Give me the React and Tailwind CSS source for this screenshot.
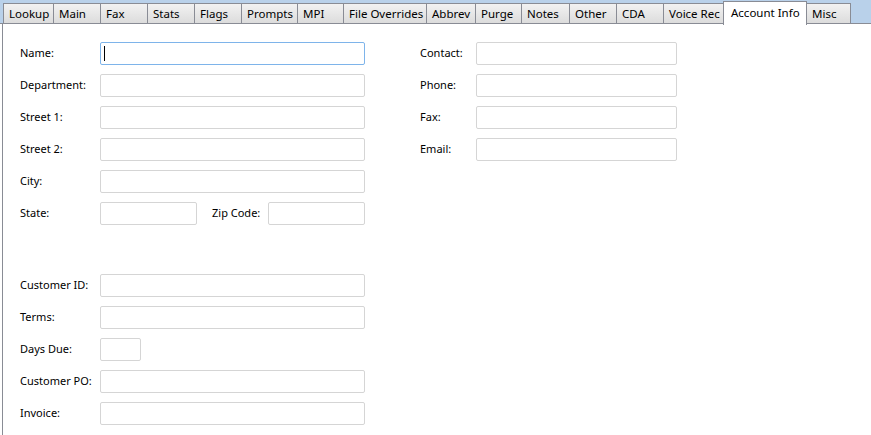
const tabs = [
  ['Lookup', 51], ['Main', 48], ['Fax', 48], ['Stats', 48], ['Flags', 48], ['Prompts', 57], ['MPI', 47],
  ['File Overrides', 84], ['Abbrev', 50], ['Purge', 47], ['Notes', 49], ['Other', 48], ['CDA', 48],
  ['Voice Rec', 61], ['Account Info', 84], ['Misc', 45],
]

function Input({ w = 'w-[265px]', focus }) {
  return (
    <div className={`${w} h-[23px] bg-white rounded-[2px] border ${focus ? 'border-[#7eb4ea]' : 'border-[#d5d5d5]'} flex items-center pl-[3px]`}>
      {focus && <div className="w-px h-[15px] bg-black" />}
    </div>
  )
}

function Row({ label, children }) {
  return (
    <div className="h-[23px] flex items-center">
      <div className="w-[80px] shrink-0">{label}</div>
      {children}
    </div>
  )
}

export default function App() {
  return (
    <div className="w-[871px] h-[435px] bg-white text-[11px] text-black overflow-hidden" style={{ fontFamily: '"Noto Sans", "DejaVu Sans", sans-serif' }}>
      <div className="h-[3px] bg-[#b9d1ea]" />
      <div className="flex pl-[3px] h-[21px] bg-[#b9d1ea] border-b border-[#898c95] relative">
        {tabs.map(([t, w]) => t === 'Account Info' ? (
          <div key={t} style={{ width: w }} className="shrink-0 whitespace-nowrap h-[24px] -mt-[2px] -ml-px bg-white border border-b-0 border-[#898c95] flex items-start pt-[2px] pl-[7px] text-[11.5px] z-10 relative">{t}</div>
        ) : (
          <div key={t} style={{ width: w }} className="shrink-0 whitespace-nowrap h-[20px] bg-gradient-to-b from-[#f2f2f2] to-[#dcdcdc] border border-b-0 border-[#898c95] -ml-px first:ml-0 flex items-center pl-[5px] text-[11.5px]">{t}</div>
        ))}
      </div>
      <div className="flex pl-[17px] pt-[18px] border-l border-[#898c95] ml-[2px] h-full">
        <div className="w-[345px] flex flex-col gap-[9px]">
          <Row label="Name:"><Input focus /></Row>
          <Row label="Department:"><Input /></Row>
          <Row label="Street 1:"><Input /></Row>
          <Row label="Street 2:"><Input /></Row>
          <Row label="City:"><Input /></Row>
          <Row label="State:">
            <Input w="w-[97px]" />
            <span className="ml-[15px] w-[56px]">Zip Code:</span>
            <Input w="w-[97px]" />
          </Row>
          <div className="h-[31px]" />
          <Row label="Customer ID:"><Input /></Row>
          <Row label="Terms:"><Input /></Row>
          <Row label="Days Due:"><Input w="w-[41px]" /></Row>
          <Row label="Customer PO:"><Input /></Row>
          <Row label="Invoice:"><Input /></Row>
        </div>
        <div className="ml-[55px] flex flex-col gap-[9px]">
          {['Contact:', 'Phone:', 'Fax:', 'Email:'].map(l => (
            <div key={l} className="h-[23px] flex items-center">
              <div className="w-[56px]">{l}</div>
              <Input w="w-[201px]" />
            </div>
          ))}
        </div>
      </div>
    </div>
  )
}
